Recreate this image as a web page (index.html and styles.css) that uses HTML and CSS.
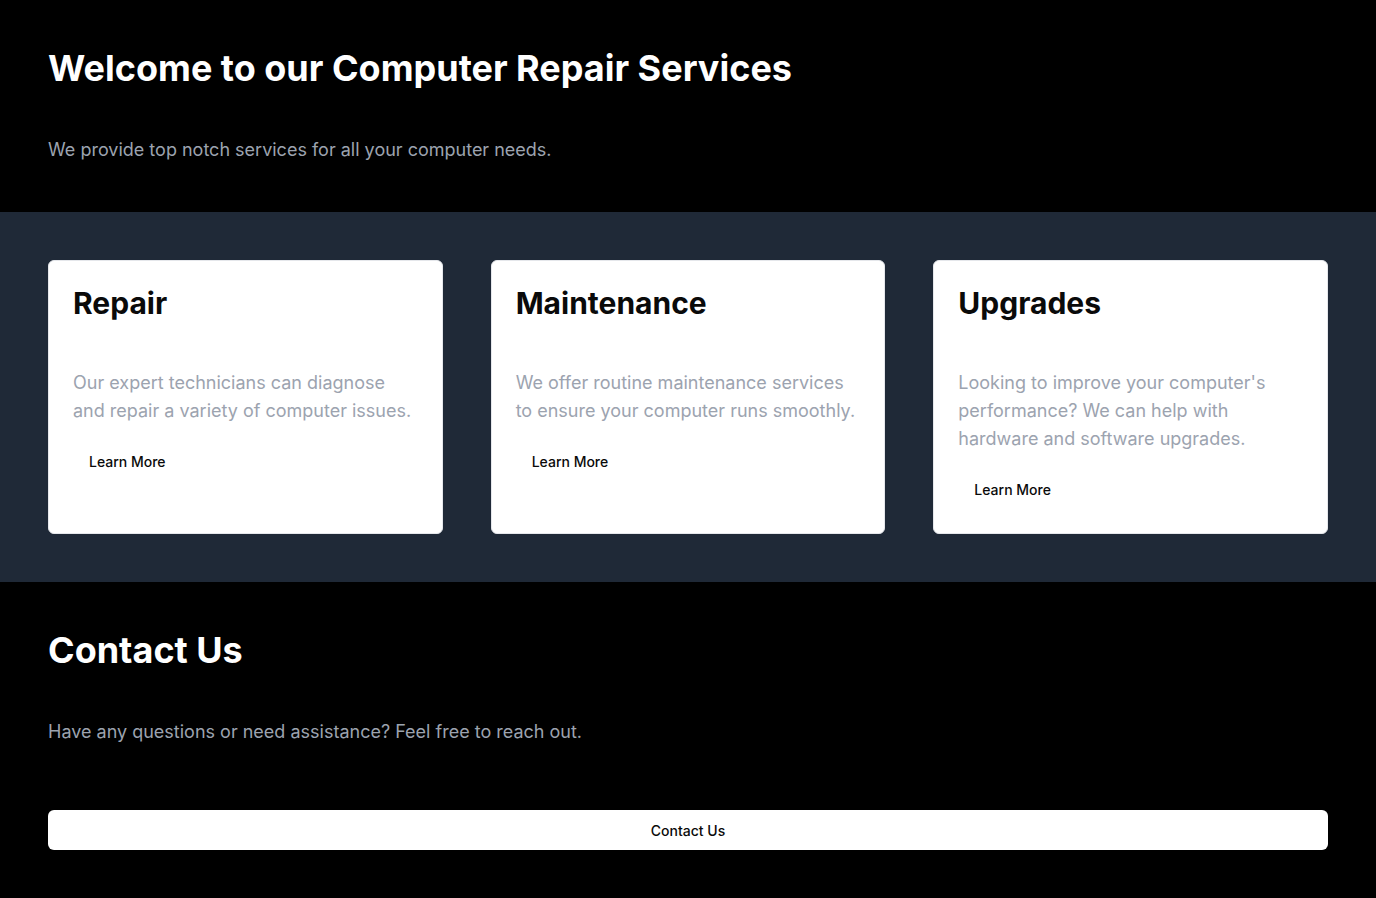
FILE: index.html
```html
<!DOCTYPE html>
<html lang="en">
<head>
<meta charset="utf-8">
<title>Computer Repair Services</title>
<link rel="stylesheet" href="styles.css">
</head>
<body>
<header class="hero">
  <h1 class="title">Welcome to our Computer Repair Services</h1>
  <p class="lead">We provide top notch services for all your computer needs.</p>
</header>
<section class="services">
  <div class="card">
    <h2 class="card-title">Repair</h2>
    <p class="card-text">Our expert technicians can diagnose and repair a variety of computer issues.</p>
    <button class="ghost-btn">Learn More</button>
  </div>
  <div class="card">
    <h2 class="card-title">Maintenance</h2>
    <p class="card-text">We offer routine maintenance services to ensure your computer runs smoothly.</p>
    <button class="ghost-btn">Learn More</button>
  </div>
  <div class="card">
    <h2 class="card-title">Upgrades</h2>
    <p class="card-text">Looking to improve your computer's performance? We can help with hardware and software upgrades.</p>
    <button class="ghost-btn">Learn More</button>
  </div>
</section>
<section class="contact">
  <h1 class="title">Contact Us</h1>
  <p class="lead contact-lead">Have any questions or need assistance? Feel free to reach out.</p>
  <button class="wide-btn">Contact Us</button>
</section>
</body>
</html>
```
FILE: styles.css
```css
* { box-sizing: border-box; }
html, body { margin: 0; padding: 0; }
body {
  background: #000;
  font-family: Inter, "Noto Sans", sans-serif;
  color: #fff;
}
.hero, .contact {
  padding: 48px;
  background: #000;
}
.title {
  margin: 0 0 48px;
  font-size: 36px;
  line-height: 40px;
  font-weight: 700;
  color: #fff;
}
.lead {
  margin: 0;
  font-size: 18px;
  line-height: 28px;
  color: #9ca3af;
}
.contact-lead { margin-bottom: 64px; }
.services {
  background: #1f2937;
  padding: 48px;
  display: grid;
  grid-template-columns: repeat(3, 1fr);
  gap: 48px;
}
.card {
  background: #fff;
  border: 1px solid #e5e7eb;
  border-radius: 6px;
  padding: 24px;
  display: flex;
  flex-direction: column;
  align-items: flex-start;
}
.card-title {
  margin: 0 0 48px;
  font-size: 30px;
  line-height: 36px;
  font-weight: 700;
  color: #0a0a0a;
}
.card-text {
  margin: 0 0 16px;
  font-size: 18px;
  line-height: 28px;
  color: #9ca3af;
}
.ghost-btn {
  height: 40px;
  padding: 0 16px;
  border: 0;
  border-radius: 6px;
  background: #fff;
  font-family: inherit;
  font-size: 14px;
  font-weight: 500;
  color: #0a0a0a;
}
.wide-btn {
  display: block;
  width: 100%;
  height: 40px;
  border: 0;
  border-radius: 6px;
  background: #fff;
  font-family: inherit;
  font-size: 14px;
  font-weight: 500;
  color: #0a0a0a;
}
```
